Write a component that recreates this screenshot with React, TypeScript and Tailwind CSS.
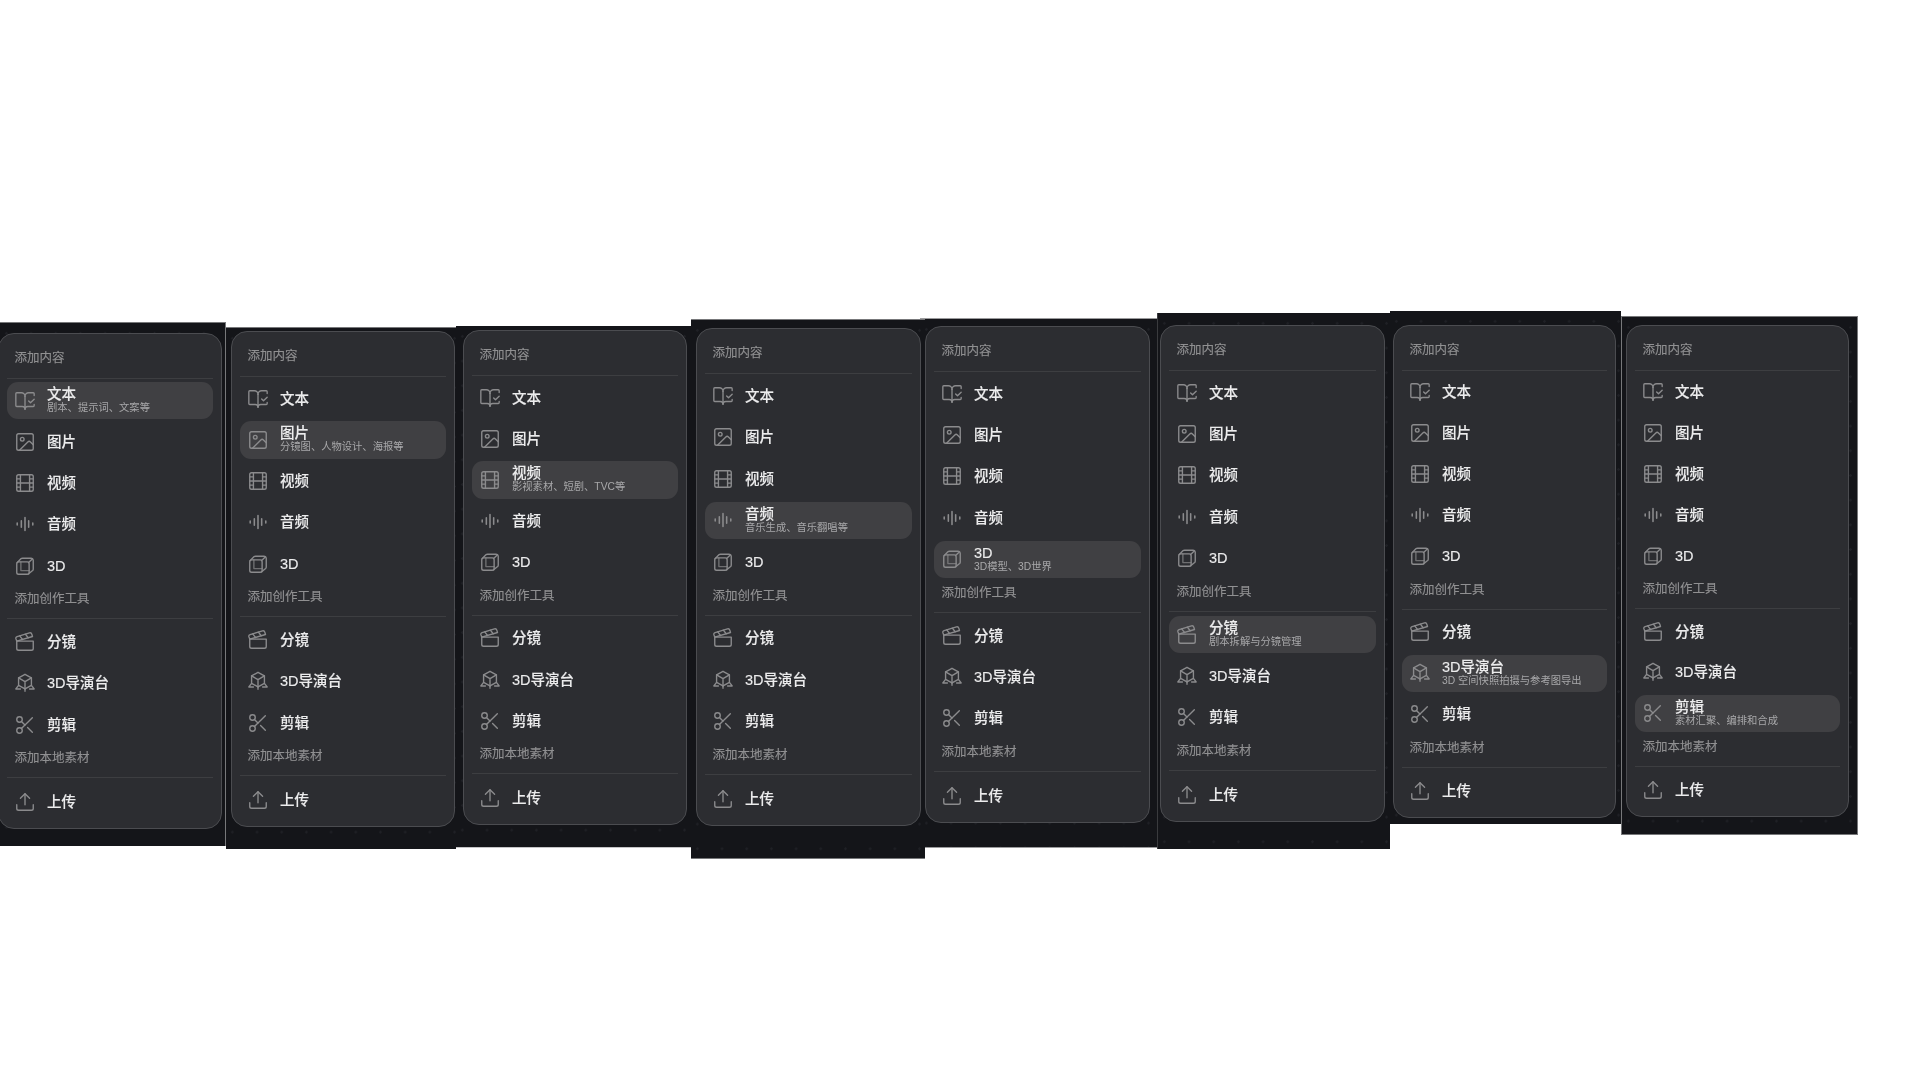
import { BookOpenCheck, Clapperboard, Film, Image, Scissors, Upload } from 'lucide-react';
import type { ReactNode } from 'react';

const iconCls = 'h-[22px] w-[22px] shrink-0 text-[#8b8b8d]';

function WaveIcon() {
    return (
        <svg viewBox="0 0 24 24" fill="none" stroke="currentColor" strokeWidth={1.7} strokeLinecap="round" className={iconCls}>
            <path d="M3.500 11V13M8 8.500V15.500M12 5V19M16 8.500V15.500M20.500 11V13" />
        </svg>
    );
}

function Box3dIcon() {
    return (
        <svg viewBox="0 0 24 24" fill="none" stroke="currentColor" strokeWidth={1.5} strokeLinecap="round" strokeLinejoin="round" className={iconCls}>
            <rect x="3" y="7.500" width="13.500" height="13.500" rx="2" />
            <path d="M3.600 8.100 7.500 4.200A2.600 2.600 0 0 1 9.300 3.500H18.500A2.500 2.500 0 0 1 21 6V15.200A2.600 2.600 0 0 1 20.300 17L16 20.400" />
            <path d="M15.900 8.100 20.300 4.200" />
            <path d="M7.500 7.500V17H16.500" opacity="0.7" />
        </svg>
    );
}

function DirectorIcon() {
    return (
        <svg viewBox="0 0 24 24" fill="none" stroke="currentColor" strokeWidth={1.5} strokeLinecap="round" strokeLinejoin="round" className={iconCls}>
            <path d="M12 2.500 19 6.500V14.500L12 18.500 5 14.500V6.500Z" />
            <path d="M5 6.500 12 10.500 19 6.500M12 10.500V18.500" />
            <path d="M5 14.500 2 18.500H7M19 14.500 22 18.500H17M12 18.500V21" />
        </svg>
    );
}

type Item = { key: string; label: string; desc: string; icon: ReactNode };

const lib: Item[] = [
    { key: 'text', label: '文本', desc: '剧本、提示词、文案等', icon: <BookOpenCheck strokeWidth={1.5} className={iconCls} /> },
    { key: 'image', label: '图片', desc: '分镜图、人物设计、海报等', icon: <Image strokeWidth={1.5} className={iconCls} /> },
    { key: 'video', label: '视频', desc: '影视素材、短剧、TVC等', icon: <Film strokeWidth={1.5} className={iconCls} /> },
    { key: 'audio', label: '音频', desc: '音乐生成、音乐翻唱等', icon: <WaveIcon /> },
    { key: '3d', label: '3D', desc: '3D模型、3D世界', icon: <Box3dIcon /> },
];

const tools: Item[] = [
    { key: 'board', label: '分镜', desc: '剧本拆解与分镜管理', icon: <Clapperboard strokeWidth={1.5} className={iconCls} /> },
    { key: 'stage', label: '3D导演台', desc: '3D 空间快照拍摄与参考图导出', icon: <DirectorIcon /> },
    { key: 'edit', label: '剪辑', desc: '素材汇聚、编排和合成', icon: <Scissors strokeWidth={1.5} className={iconCls} /> },
];

const upload: Item = { key: 'upload', label: '上传', desc: '', icon: <Upload strokeWidth={1.5} className={iconCls} /> };

// each frame is one stitched capture, the offsets are what the picture shows
const frames = [
    { active: 'text', frame: 'mt-[322px] w-[226px] h-[524px] border-t border-r border-[#77787a]', panel: '-ml-[2px] mt-[10px] w-[224px] h-[496px]' },
    { active: 'image', frame: 'mt-[327px] w-[230px] h-[522px] border-t border-[#77787a]', panel: 'ml-[5px] mt-[3px] w-[224px] h-[496px]' },
    { active: 'video', frame: 'mt-[326px] w-[235px] h-[522px] border-b border-[#c4c4c6]', panel: 'ml-[7px] mt-[4px] w-[224px] h-[495px]' },
    { active: 'audio', frame: 'relative z-10 mt-[319px] w-[234px] h-[540px] border-t border-b border-[#77787a]', panel: 'ml-[5px] mt-[8px] w-[225px] h-[498px]' },
    { active: '3d', frame: '-ml-[5px] mt-[318px] w-[237px] h-[530px] border-t border-b border-[#9a9a9c]', panel: 'ml-[5px] mt-[7px] w-[225px] h-[497px]' },
    { active: 'board', frame: 'mt-[313px] w-[233px] h-[536px] border-l border-[#3a3b3e]', panel: 'ml-[2px] mt-[12px] w-[225px] h-[497px]' },
    { active: 'stage', frame: 'mt-[311px] w-[231px] h-[513px]', panel: 'ml-[3px] mt-[14px] w-[223px] h-[493px]' },
    { active: 'edit', frame: 'mt-[316px] w-[237px] h-[519px] border border-[#77787a]', panel: 'ml-[4px] mt-[8px] w-[223px] h-[492px]' },
];

function Row({ item, active }: { item: Item; active: boolean }) {
    return (
        <div className={`my-[2px] flex min-h-0 flex-1 items-center gap-[11.500px] rounded-[11px] pl-[6.500px] ${active ? 'bg-[#404043]' : ''}`}>
            {item.icon}
            <div className="flex min-w-0 flex-col">
                <span className="text-[14.5px] leading-[14px] font-medium text-[#ececed] [-webkit-text-stroke:0.12px_#ececed]">{item.label}</span>
                {active && <span className="text-[10.300px] leading-[13px] whitespace-nowrap text-[#a8a8aa]">{item.desc}</span>}
            </div>
        </div>
    );
}

function SectionLabel({ text, className }: { text: string; className: string }) {
    return <div className={`px-[7.500px] text-[12.500px] leading-[14px] text-[#909092] [-webkit-text-stroke:0.15px_#909092] ${className}`}>{text}</div>;
}

function Panel({ active, className }: { active: string; className: string }) {
    return (
        <div className={`flex flex-col rounded-[16px] border-[1.5px] border-[#4b4c50] bg-[#2c2d31] px-[8px] pb-[5.500px] ${className}`}>
            <SectionLabel text="添加内容" className="pt-[17px] pb-[13px]" />
            <div className="mb-[1px] h-px shrink-0 bg-[#3d3e41]" />
            {lib.map(it => <Row key={it.key} item={it} active={active === it.key} />)}
            <SectionLabel text="添加创作工具" className="pt-[6px] pb-[12px]" />
            <div className="mb-[2px] h-px shrink-0 bg-[#3d3e41]" />
            {tools.map(it => <Row key={it.key} item={it} active={active === it.key} />)}
            <SectionLabel text="添加本地素材" className="pt-[6px] pb-[12px]" />
            <div className="mb-[3px] h-px shrink-0 bg-[#3d3e41]" />
            <Row item={upload} active={false} />
        </div>
    );
}

export default function App() {
    return (
        <div className="flex min-h-screen items-start overflow-hidden bg-white font-['Liberation_Sans','Noto_Sans_CJK_SC',sans-serif] blur-[0.4px]">
            {frames.map(f => (
                <div
                    key={f.active}
                    className={`shrink-0 overflow-hidden bg-[#141519] bg-[radial-gradient(circle,#1f2025_1px,transparent_1.5px)] bg-[size:24.700px_24.700px] bg-[position:-6px_-2px] ${f.frame}`}
                >
                    <Panel active={f.active} className={f.panel} />
                </div>
            ))}
        </div>
    );
}
